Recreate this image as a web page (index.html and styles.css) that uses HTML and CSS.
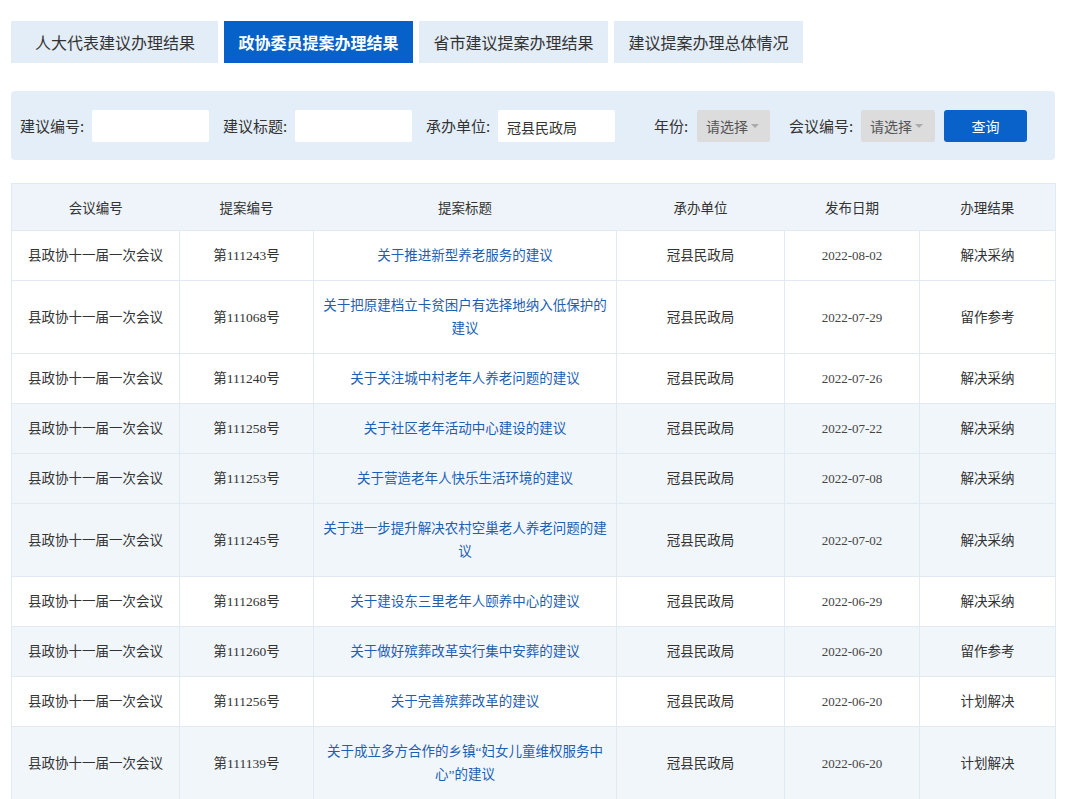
FILE: index.html
```html
<!DOCTYPE html>
<html lang="zh-CN">
<head>
    <meta charset="UTF-8">
    <meta name="viewport" content="width=device-width, initial-scale=1.0">
    <title>建议提案办理结果</title>
    <link rel="stylesheet" href="styles.css">
</head>
<body>
    <div class="page">
        <div class="tabs">
            <a class="tab tab-first" href="#">人大代表建议办理结果</a>
            <a class="tab active" href="#">政协委员提案办理结果</a>
            <a class="tab" href="#">省市建议提案办理结果</a>
            <a class="tab" href="#">建议提案办理总体情况</a>
        </div>

        <div class="search-bar">
            <label class="field-label" for="codeInput">建议编号:</label>
            <input type="text" class="field-input" id="codeInput">

            <label class="field-label gap" for="titleInput">建议标题:</label>
            <input type="text" class="field-input" id="titleInput">

            <label class="field-label gap" for="unitInput">承办单位:</label>
            <input type="text" class="field-input" id="unitInput" value="冠县民政局">

            <span class="field-label gap-wide">年份:</span>
            <div class="fake-select">请选择<span class="caret"></span></div>

            <span class="field-label gap-mid">会议编号:</span>
            <div class="fake-select wide">请选择<span class="caret"></span></div>

            <button class="search-btn">查询</button>
        </div>

        <table class="result-table">
            <colgroup>
                <col style="width:168px">
                <col style="width:134px">
                <col style="width:303px">
                <col style="width:168px">
                <col style="width:135px">
                <col style="width:136px">
            </colgroup>
            <thead>
                <tr>
                    <th>会议编号</th>
                    <th>提案编号</th>
                    <th>提案标题</th>
                    <th>承办单位</th>
                    <th>发布日期</th>
                    <th>办理结果</th>
                </tr>
            </thead>
            <tbody>
                <tr>
                    <td>县政协十一届一次会议</td>
                    <td>第111243号</td>
                    <td><a href="#">关于推进新型养老服务的建议</a></td>
                    <td>冠县民政局</td>
                    <td class="date">2022-08-02</td>
                    <td>解决采纳</td>
                </tr>
                <tr>
                    <td>县政协十一届一次会议</td>
                    <td>第111068号</td>
                    <td><a href="#">关于把原建档立卡贫困户有选择地纳入低保护的建议</a></td>
                    <td>冠县民政局</td>
                    <td class="date">2022-07-29</td>
                    <td>留作参考</td>
                </tr>
                <tr>
                    <td>县政协十一届一次会议</td>
                    <td>第111240号</td>
                    <td><a href="#">关于关注城中村老年人养老问题的建议</a></td>
                    <td>冠县民政局</td>
                    <td class="date">2022-07-26</td>
                    <td>解决采纳</td>
                </tr>
                <tr class="alt">
                    <td>县政协十一届一次会议</td>
                    <td>第111258号</td>
                    <td><a href="#">关于社区老年活动中心建设的建议</a></td>
                    <td>冠县民政局</td>
                    <td class="date">2022-07-22</td>
                    <td>解决采纳</td>
                </tr>
                <tr class="alt">
                    <td>县政协十一届一次会议</td>
                    <td>第111253号</td>
                    <td><a href="#">关于营造老年人快乐生活环境的建议</a></td>
                    <td>冠县民政局</td>
                    <td class="date">2022-07-08</td>
                    <td>解决采纳</td>
                </tr>
                <tr class="alt">
                    <td>县政协十一届一次会议</td>
                    <td>第111245号</td>
                    <td><a href="#">关于进一步提升解决农村空巢老人养老问题的建议</a></td>
                    <td>冠县民政局</td>
                    <td class="date">2022-07-02</td>
                    <td>解决采纳</td>
                </tr>
                <tr>
                    <td>县政协十一届一次会议</td>
                    <td>第111268号</td>
                    <td><a href="#">关于建设东三里老年人颐养中心的建议</a></td>
                    <td>冠县民政局</td>
                    <td class="date">2022-06-29</td>
                    <td>解决采纳</td>
                </tr>
                <tr class="alt">
                    <td>县政协十一届一次会议</td>
                    <td>第111260号</td>
                    <td><a href="#">关于做好殡葬改革实行集中安葬的建议</a></td>
                    <td>冠县民政局</td>
                    <td class="date">2022-06-20</td>
                    <td>留作参考</td>
                </tr>
                <tr>
                    <td>县政协十一届一次会议</td>
                    <td>第111256号</td>
                    <td><a href="#">关于完善殡葬改革的建议</a></td>
                    <td>冠县民政局</td>
                    <td class="date">2022-06-20</td>
                    <td>计划解决</td>
                </tr>
                <tr class="alt">
                    <td>县政协十一届一次会议</td>
                    <td>第111139号</td>
                    <td><a href="#">关于成立多方合作的乡镇“妇女儿童维权服务中心”的建议</a></td>
                    <td>冠县民政局</td>
                    <td class="date">2022-06-20</td>
                    <td>计划解决</td>
                </tr>
            </tbody>
        </table>
    </div>
</body>
</html>
```

FILE: styles.css
```css
body {
    margin: 0;
    background-color: #fff;
    font-family: "Liberation Serif", "Noto Sans CJK SC", serif;
    color: #333;
}
.page {
    width: 1044px;
    padding: 21px 0 0 11px;
}
/* 顶部标签 */
.tabs {
    display: flex;
    gap: 6px;
}
.tab {
    display: flex;
    align-items: center;
    height: 42px;
    padding: 0 14.5px;
    background-color: #e3edf8;
    color: #333;
    font-family: "Noto Sans CJK SC", sans-serif;
    font-size: 16px;
    text-decoration: none;
}
.tab-first {
    padding: 0 23px 0 24px;
}
.tab.active {
    background-color: #0661c8;
    color: #fff;
    font-weight: bold;
}
/* 查询条 */
.search-bar {
    display: flex;
    align-items: center;
    height: 69px;
    margin-top: 28px;
    padding: 0 9px;
    background-color: #e4eef9;
    border-radius: 4px;
}
.field-label {
    width: 64px;
    margin-right: 8px;
    color: #333;
    font-family: "Noto Sans CJK SC", sans-serif;
    font-size: 15px;
    white-space: nowrap;
}
.field-label.gap {
    margin-left: 14px;
}
.field-label.gap-wide {
    width: 34px;
    margin-left: 39px;
    margin-right: 9px;
}
.field-label.gap-mid {
    margin-left: 19px;
}
.field-input {
    width: 117px;
    height: 32px;
    box-sizing: border-box;
    padding: 2px 9px 0;
    border: none;
    border-radius: 2px;
    background-color: #fff;
    font-family: "Noto Sans CJK SC", sans-serif;
    font-size: 14px;
    color: #333;
}
.fake-select {
    display: flex;
    align-items: center;
    width: 73px;
    height: 32px;
    box-sizing: border-box;
    padding: 0 9px;
    background-color: #dcdcdc;
    border-radius: 2px;
    color: #555;
    font-family: "Noto Sans CJK SC", sans-serif;
    font-size: 14px;
}
.fake-select.wide {
    width: 74px;
}
.caret {
    width: 0;
    height: 0;
    margin-left: 3px;
    border-left: 4px solid transparent;
    border-right: 4px solid transparent;
    border-top: 4px solid #aaa;
}
.search-btn {
    width: 83px;
    height: 32px;
    margin-left: 9px;
    border: none;
    border-radius: 3px;
    background-color: #0862c9;
    color: #fff;
    font-family: "Noto Sans CJK SC", sans-serif;
    font-size: 14px;
    cursor: pointer;
}
/* 结果表格 */
.result-table {
    width: 1044px;
    margin-top: 23px;
    border-collapse: collapse;
    table-layout: fixed;
    border: 1px solid #e1e9f2;
    font-size: 13.5px;
}
.result-table th {
    height: 46px;
    padding: 0;
    background-color: #eef4fa;
    border-bottom: 1px solid #e1e9f2;
    font-weight: normal;
    color: #333;
    font-family: "Noto Sans CJK SC", sans-serif;
    font-size: 13.5px;
}
.result-table td {
    padding: 13px 9px;
    line-height: 23px;
    text-align: center;
    border: 1px solid #e1e9f2;
    color: #333;
}
.result-table tr.alt td {
    background-color: #f1f6fb;
}
.result-table td.date {
    font-size: 13px;
    color: #444;
}
.result-table a {
    color: #1d5fb3;
    text-decoration: none;
}
```
